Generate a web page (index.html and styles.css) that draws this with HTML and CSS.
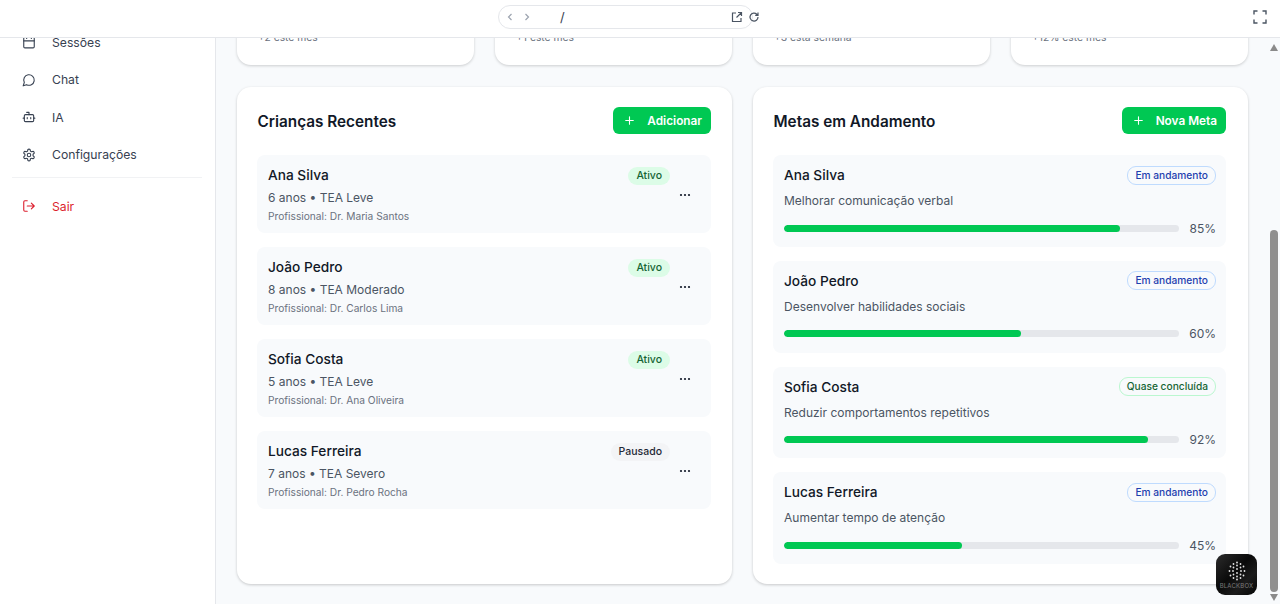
FILE: index.html
```html
<!DOCTYPE html>
<html lang="en">

<head>
    <meta charset="UTF-8">
    <meta name="viewport" content="width=device-width, initial-scale=1.0">
    <title>Painel</title>
    <link rel="stylesheet" href="styles.css">
</head>

<body>
    <div class="topbar">
        <div class="url-pill">
            <svg class="nav-arrow" viewBox="0 0 10 10"><path d="M6.5 2 3.5 5l3 3"></path></svg>
            <svg class="nav-arrow" viewBox="0 0 10 10"><path d="M3.5 2l3 3-3 3"></path></svg>
            <span class="url-text">/</span>
            <svg class="pill-icon open-icon" viewBox="0 0 12 12"><path d="M5 2H1.5v8.5H10V7M7 1.5h3.5V5M10.5 1.5 5.5 6.5"></path></svg>
            <svg class="pill-icon reload-icon" viewBox="0 0 12 12"><path d="M10 6a4 4 0 1 1-1.2-2.8L10 4.4M10 1.6v2.8H7.2"></path></svg>
        </div>
        <svg class="expand-icon" viewBox="0 0 14 14"><path d="M1 4.5V1h3.5M9.5 1H13v3.5M13 9.5V13H9.5M4.5 13H1V9.5"></path></svg>
    </div>

    <div class="layout">
        <aside class="sidebar">
            <nav class="menu">
                <a class="menu-item clipped">
                    <svg viewBox="0 0 24 24"><rect x="3" y="4" width="18" height="18" rx="2"></rect><path d="M3 10h18M8 2v4M16 2v4"></path></svg>
                    Sessões
                </a>
                <a class="menu-item">
                    <svg viewBox="0 0 24 24"><path d="M7.9 20A9 9 0 1 0 4 16.1L2 22z"></path></svg>
                    Chat
                </a>
                <a class="menu-item">
                    <svg viewBox="0 0 24 24"><path d="M12 8V4H8"></path><rect x="4" y="8" width="16" height="12" rx="2"></rect><path d="M2 14h2M20 14h2M15 13v2M9 13v2"></path></svg>
                    IA
                </a>
                <a class="menu-item">
                    <svg viewBox="0 0 24 24"><path d="M12.22 2h-.44a2 2 0 0 0-2 2v.18a2 2 0 0 1-1 1.73l-.43.25a2 2 0 0 1-2 0l-.15-.08a2 2 0 0 0-2.73.73l-.22.38a2 2 0 0 0 .73 2.73l.15.1a2 2 0 0 1 1 1.72v.51a2 2 0 0 1-1 1.74l-.15.09a2 2 0 0 0-.73 2.73l.22.38a2 2 0 0 0 2.73.73l.15-.08a2 2 0 0 1 2 0l.43.25a2 2 0 0 1 1 1.73V20a2 2 0 0 0 2 2h.44a2 2 0 0 0 2-2v-.18a2 2 0 0 1 1-1.73l.43-.25a2 2 0 0 1 2 0l.15.08a2 2 0 0 0 2.73-.73l.22-.39a2 2 0 0 0-.73-2.73l-.15-.08a2 2 0 0 1-1-1.74v-.5a2 2 0 0 1 1-1.74l.15-.09a2 2 0 0 0 .73-2.73l-.22-.38a2 2 0 0 0-2.73-.73l-.15.08a2 2 0 0 1-2 0l-.43-.25a2 2 0 0 1-1-1.73V4a2 2 0 0 0-2-2z"></path><circle cx="12" cy="12" r="3"></circle></svg>
                    Configurações
                </a>
                <div class="menu-divider"></div>
                <a class="menu-item logout">
                    <svg viewBox="0 0 24 24"><path d="M9 21H5a2 2 0 0 1-2-2V5a2 2 0 0 1 2-2h4M16 17l5-5-5-5M21 12H9"></path></svg>
                    Sair
                </a>
            </nav>
        </aside>

        <main class="main">
            <section class="stats">
                <div class="stat-card"><span>+2 este mês</span></div>
                <div class="stat-card"><span>+1 este mês</span></div>
                <div class="stat-card"><span>+3 esta semana</span></div>
                <div class="stat-card"><span>+12% este mês</span></div>
            </section>

            <section class="panels">
                <div class="panel">
                    <div class="panel-head">
                        <h2>Crianças Recentes</h2>
                        <button class="add-btn">
                            <svg viewBox="0 0 24 24"><path d="M5 12h14M12 5v14"></path></svg>
                            Adicionar
                        </button>
                    </div>
                    <div class="child-list">
                        <div class="child">
                            <div class="child-info">
                                <h3>Ana Silva</h3>
                                <p class="child-meta">6 anos • TEA Leve</p>
                                <p class="child-prof">Profissional: Dr. Maria Santos</p>
                            </div>
                            <div class="child-side">
                                <span class="badge active">Ativo</span>
                                <svg class="more" viewBox="0 0 12 4"><circle cx="2" cy="2" r="1.1"></circle><circle cx="6" cy="2" r="1.1"></circle><circle cx="10" cy="2" r="1.1"></circle></svg>
                            </div>
                        </div>
                        <div class="child">
                            <div class="child-info">
                                <h3>João Pedro</h3>
                                <p class="child-meta">8 anos • TEA Moderado</p>
                                <p class="child-prof">Profissional: Dr. Carlos Lima</p>
                            </div>
                            <div class="child-side">
                                <span class="badge active">Ativo</span>
                                <svg class="more" viewBox="0 0 12 4"><circle cx="2" cy="2" r="1.1"></circle><circle cx="6" cy="2" r="1.1"></circle><circle cx="10" cy="2" r="1.1"></circle></svg>
                            </div>
                        </div>
                        <div class="child">
                            <div class="child-info">
                                <h3>Sofia Costa</h3>
                                <p class="child-meta">5 anos • TEA Leve</p>
                                <p class="child-prof">Profissional: Dr. Ana Oliveira</p>
                            </div>
                            <div class="child-side">
                                <span class="badge active">Ativo</span>
                                <svg class="more" viewBox="0 0 12 4"><circle cx="2" cy="2" r="1.1"></circle><circle cx="6" cy="2" r="1.1"></circle><circle cx="10" cy="2" r="1.1"></circle></svg>
                            </div>
                        </div>
                        <div class="child">
                            <div class="child-info">
                                <h3>Lucas Ferreira</h3>
                                <p class="child-meta">7 anos • TEA Severo</p>
                                <p class="child-prof">Profissional: Dr. Pedro Rocha</p>
                            </div>
                            <div class="child-side">
                                <span class="badge paused">Pausado</span>
                                <svg class="more" viewBox="0 0 12 4"><circle cx="2" cy="2" r="1.1"></circle><circle cx="6" cy="2" r="1.1"></circle><circle cx="10" cy="2" r="1.1"></circle></svg>
                            </div>
                        </div>
                    </div>
                </div>

                <div class="panel">
                    <div class="panel-head">
                        <h2>Metas em Andamento</h2>
                        <button class="add-btn">
                            <svg viewBox="0 0 24 24"><path d="M5 12h14M12 5v14"></path></svg>
                            Nova Meta
                        </button>
                    </div>
                    <div class="goal-list">
                        <div class="goal">
                            <div class="goal-top">
                                <h3>Ana Silva</h3>
                                <span class="badge progress">Em andamento</span>
                            </div>
                            <p class="goal-text">Melhorar comunicação verbal</p>
                            <div class="goal-bar">
                                <div class="track"><div class="fill" style="width: 85%"></div></div>
                                <span class="pct">85%</span>
                            </div>
                        </div>
                        <div class="goal">
                            <div class="goal-top">
                                <h3>João Pedro</h3>
                                <span class="badge progress">Em andamento</span>
                            </div>
                            <p class="goal-text">Desenvolver habilidades sociais</p>
                            <div class="goal-bar">
                                <div class="track"><div class="fill" style="width: 60%"></div></div>
                                <span class="pct">60%</span>
                            </div>
                        </div>
                        <div class="goal">
                            <div class="goal-top">
                                <h3>Sofia Costa</h3>
                                <span class="badge almost">Quase concluída</span>
                            </div>
                            <p class="goal-text">Reduzir comportamentos repetitivos</p>
                            <div class="goal-bar">
                                <div class="track"><div class="fill" style="width: 92%"></div></div>
                                <span class="pct">92%</span>
                            </div>
                        </div>
                        <div class="goal">
                            <div class="goal-top">
                                <h3>Lucas Ferreira</h3>
                                <span class="badge progress">Em andamento</span>
                            </div>
                            <p class="goal-text">Aumentar tempo de atenção</p>
                            <div class="goal-bar">
                                <div class="track"><div class="fill" style="width: 45%"></div></div>
                                <span class="pct">45%</span>
                            </div>
                        </div>
                    </div>
                </div>
            </section>
        </main>

        <div class="scrollbar">
            <span class="arrow-up"></span>
            <div class="thumb"></div>
            <span class="arrow-down"></span>
        </div>
    </div>

    <div class="blackbox">
        <svg viewBox="0 0 20 20">
            <g fill="#e4e4e4">
                <circle cx="10" cy="1.5" r=".9"></circle>
                <circle cx="6.5" cy="3" r=".9"></circle><circle cx="10" cy="4.5" r=".9"></circle><circle cx="13.5" cy="3" r=".9"></circle>
                <circle cx="3.5" cy="5.5" r=".9"></circle><circle cx="6.5" cy="6.5" r=".9"></circle><circle cx="13.5" cy="6.5" r=".9"></circle><circle cx="16.5" cy="5.5" r=".9"></circle>
                <circle cx="2.5" cy="10" r=".9"></circle><circle cx="6" cy="10" r=".9"></circle><circle cx="10" cy="8" r=".9"></circle><circle cx="10" cy="12" r=".9"></circle><circle cx="14" cy="10" r=".9"></circle><circle cx="17.5" cy="10" r=".9"></circle>
                <circle cx="3.5" cy="14.5" r=".9"></circle><circle cx="6.5" cy="13.5" r=".9"></circle><circle cx="13.5" cy="13.5" r=".9"></circle><circle cx="16.5" cy="14.5" r=".9"></circle>
                <circle cx="6.5" cy="17" r=".9"></circle><circle cx="10" cy="15.5" r=".9"></circle><circle cx="13.5" cy="17" r=".9"></circle>
                <circle cx="10" cy="18.5" r=".9"></circle>
            </g>
        </svg>
        <span>BLACKBOX</span>
    </div>
</body>

</html>
```

FILE: styles.css
```css
* {
    margin: 0;
    padding: 0;
    box-sizing: border-box;
    font-family: 'Inter', 'Liberation Sans', sans-serif;
}

html,
body {
    height: 100%;
    overflow: hidden;
}

body {
    display: flex;
    flex-direction: column;
    background: #f8fafc;
    color: #0f172a;
}

/* Top preview bar */
.topbar {
    display: flex;
    align-items: flex-start;
    justify-content: flex-end;
    position: relative;
    height: 38px;
    flex-shrink: 0;
    padding: 10px 13px 0 0;
    background: #fff;
    border-bottom: 1px solid #e5e7eb;
}

.url-pill {
    position: absolute;
    left: 498px;
    top: 5px;
    display: flex;
    align-items: center;
    width: 255px;
    height: 24px;
    padding-left: 6px;
    border: 1px solid #e5e7eb;
    border-radius: 12px;
    background: #fff;
}

.nav-arrow {
    width: 10px;
    height: 10px;
    margin-right: 7px;
    fill: none;
    stroke: #9ca3af;
    stroke-width: 1.2;
}

.url-text {
    margin-left: 21px;
    font-size: 13px;
    color: #374151;
}

.pill-icon {
    width: 12px;
    height: 12px;
    fill: none;
    stroke: #4b5563;
    stroke-width: 1.2;
}

.open-icon {
    margin-left: auto;
}

.reload-icon {
    margin: 0 -8px 0 5px;
}

.expand-icon {
    width: 14px;
    height: 14px;
    fill: none;
    stroke: #4b5563;
    stroke-width: 1.4;
}

.layout {
    display: flex;
    flex: 1;
    min-height: 0;
}

/* Sidebar */
.sidebar {
    width: 216px;
    flex-shrink: 0;
    background: #fff;
    border-right: 1px solid #e5e7eb;
    overflow: hidden;
}

.menu {
    display: flex;
    flex-direction: column;
    padding: 0 13px;
}

.menu-item {
    display: flex;
    align-items: center;
    gap: 16.5px;
    height: 37.5px;
    padding-left: 8.5px;
    font-size: 12.2px;
    font-weight: 400;
    color: #374151;
}

.menu-item svg {
    width: 14px;
    height: 14px;
    flex-shrink: 0;
    fill: none;
    stroke: #374151;
    stroke-width: 1.9;
    stroke-linecap: round;
    stroke-linejoin: round;
}

.clipped {
    margin-top: -14.5px;
}

.menu-divider {
    height: 1px;
    margin: 3px 0 10px -1px;
    background: #f1f2f4;
}

.logout {
    color: #dc1f2e;
}

.logout svg {
    stroke: #dc1f2e;
}

/* Main content */
.main {
    flex: 1;
    min-width: 0;
    padding: 0 20px 0 21px;
    overflow: hidden;
}

.stats {
    display: grid;
    grid-template-columns: repeat(4, 1fr);
    gap: 21px;
    height: 27px;
    margin-bottom: 22px;
}

.stat-card {
    display: flex;
    align-items: flex-start;
    padding-left: 21px;
    margin-top: -20px;
    height: 47px;
    background: #fff;
    border-radius: 0 0 14px 14px;
    box-shadow: 0 1px 3px rgba(0, 0, 0, 0.18);
    font-size: 10.3px;
    color: #6b7280;
}

.stat-card span {
    margin-top: 13px;
}

.panels {
    display: grid;
    grid-template-columns: 1fr 1fr;
    gap: 21px;
}

.panel {
    height: 497px;
    padding: 20px 21px 20px 20px;
    background: #fff;
    border-radius: 14px;
    box-shadow: 0 1px 3px rgba(0, 0, 0, 0.2);
}

.panel:last-child {
    padding-right: 22px;
}

.panel-head {
    display: flex;
    align-items: center;
    justify-content: space-between;
    height: 27px;
    margin-bottom: 21px;
}

.panel-head h2 {
    padding: 1px 0 0 0.5px;
    font-size: 15.3px;
    font-weight: 600;
    color: #111827;
}

.add-btn {
    display: flex;
    align-items: center;
    gap: 11px;
    height: 27px;
    padding: 0 9px 0 10px;
    border: none;
    border-radius: 6px;
    background: #00c853;
    color: #fff;
    font-size: 11.8px;
    font-weight: 600;
}

.add-btn svg {
    width: 13px;
    height: 13px;
    fill: none;
    stroke: #fff;
    stroke-width: 2;
    stroke-linecap: round;
}

.child-list {
    display: flex;
    flex-direction: column;
    gap: 14px;
}

.child {
    display: flex;
    justify-content: space-between;
    height: 78px;
    padding: 12px 41px 0 11px;
    background: #f8fafc;
    border-radius: 8px;
}

.child h3,
.goal h3 {
    font-size: 13.7px;
    font-weight: 450;
    line-height: 16px;
    color: #111827;
}

.child-meta {
    margin-top: 7px;
    font-size: 12px;
    line-height: 16px;
    color: #4b5563;
}

.child-prof {
    margin-top: 3px;
    font-size: 10.2px;
    line-height: 14px;
    color: #6b7280;
}

.child-side {
    display: flex;
    flex-direction: column;
    align-items: flex-end;
}

.badge {
    display: inline-block;
    padding: 0 8px;
    height: 18px;
    border-radius: 9px;
    font-size: 10.5px;
    font-weight: 450;
    line-height: 17px;
}

.active {
    background: #dcfce7;
    color: #166534;
}

.paused {
    background: #f3f4f6;
    color: #1f2937;
}

.progress,
.almost {
    height: 19px;
    padding: 0 7px;
    background: #f8fafc;
    font-size: 10.2px;
}

.progress {
    border: 1px solid #bfdbfe;
    color: #1e40af;
}

.almost {
    border: 1px solid #bbf7d0;
    color: #166534;
}

.more {
    width: 12px;
    height: 4px;
    margin: 7.5px -21px 0 0;
    fill: #111827;
}

.goal-list {
    display: flex;
    flex-direction: column;
    gap: 14px;
}

.goal {
    height: 91.8px;
    padding: 11px 10px 0 11px;
    background: #f8fafc;
    border-radius: 8px;
}

.goal-top {
    display: flex;
    align-items: center;
    justify-content: space-between;
    height: 18px;
}

.goal-text {
    margin-top: 9px;
    font-size: 12px;
    line-height: 16px;
    color: #4b5563;
}

.goal-bar {
    display: flex;
    align-items: center;
    gap: 10px;
    margin-top: 11.7px;
}

.track {
    flex: 1;
    height: 7px;
    border-radius: 4px;
    background: #e5e7eb;
    overflow: hidden;
}

.fill {
    height: 100%;
    border-radius: 4px;
    background: #00c853;
}

.pct {
    font-size: 12px;
    color: #4b5563;
}

/* Scrollbar */
.scrollbar {
    display: flex;
    flex-direction: column;
    align-items: center;
    width: 12px;
    flex-shrink: 0;
    padding: 6px 0 3px;
    background: #f8fafc;
}

.arrow-up,
.arrow-down {
    width: 0;
    height: 0;
    border-left: 4.5px solid transparent;
    border-right: 4.5px solid transparent;
}

.arrow-up {
    border-bottom: 7px solid #8a8a8a;
}

.arrow-down {
    border-top: 7px solid #8a8a8a;
}

.thumb {
    width: 8px;
    height: 362px;
    margin: auto 0 2px;
    border-radius: 4px;
    background: #8f8f8f;
}

/* Floating badge */
.blackbox {
    position: absolute;
    left: 1216px;
    top: 554px;
    display: flex;
    flex-direction: column;
    align-items: center;
    width: 41px;
    height: 41px;
    padding-top: 7px;
    border-radius: 9px;
    background: linear-gradient(135deg, #2c2c2c, #0a0a0a 45%, #1c1c1c 70%, #050505);
}

.blackbox svg {
    width: 20px;
    height: 20px;
}

.blackbox span {
    margin-top: 1px;
    font-size: 6px;
    letter-spacing: 0.2px;
    line-height: 7px;
    color: #7a7a7a;
}
```
